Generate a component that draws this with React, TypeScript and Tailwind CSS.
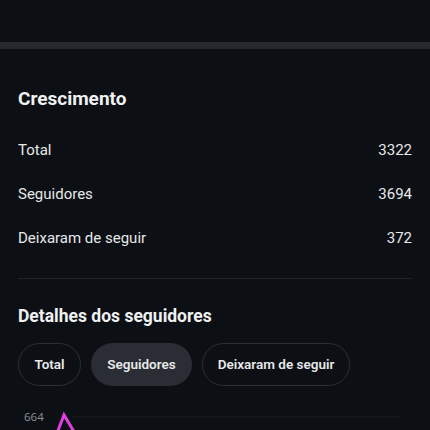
import React from "react";

const stats = [
  { label: "Total", value: "3322" },
  { label: "Seguidores", value: "3694" },
  { label: "Deixaram de seguir", value: "372" },
];

const tabs = [
  { label: "Total", width: "w-[63px]", active: false },
  { label: "Seguidores", width: "w-[101px]", active: true },
  { label: "Deixaram de seguir", width: "w-[148px]", active: false },
];

export default function App() {
  return (
    <div
      className="h-[430px] w-[430px] overflow-hidden bg-[#0c0f14] text-[#e7e9ea]"
      style={{ fontFamily: "Roboto, 'Noto Sans', sans-serif" }}
    >
      <div className="h-[42px]" />
      <div className="h-[7px] bg-[#25282d]" />

      <div className="px-[18px]">
        <h2 className="mt-[38px] text-[19px] font-bold leading-[24px] text-[#eff1f2]">
          Crescimento
        </h2>

        <div className="mt-[17px] flex flex-col">
          {stats.map((s) => (
            <div key={s.label} className="flex h-[44px] items-center justify-between text-[15px]">
              <span>{s.label}</span>
              <span>{s.value}</span>
            </div>
          ))}
        </div>

        <div className="mt-[18px] h-px bg-[#1f2227]" />

        <h3 className="mt-[25px] text-[17.5px] font-bold leading-[24px] text-[#eff1f2]">
          Detalhes dos seguidores
        </h3>

        <div className="mt-[15px] flex gap-[10px]">
          {tabs.map((t) => (
            <button
              key={t.label}
              className={`${t.width} flex h-[43px] items-center justify-center rounded-full text-[13.5px] font-semibold ${
                t.active
                  ? "bg-[#2a2d33] text-[#e7e9ea]"
                  : "border border-[#2c2f34] text-[#e7e9ea]"
              }`}
            >
              {t.label}
            </button>
          ))}
        </div>
      </div>

      <div className="relative mt-[23px] h-[40px]">
        <span
          className="absolute left-[24px] top-0 text-[11.5px] leading-[16px] text-[#8e9297]"
          style={{ fontFamily: "'Open Sans', sans-serif" }}
        >
          664
        </span>
        <svg className="absolute inset-0" width="430" height="40" viewBox="0 0 430 40">
          <line x1="72" y1="8" x2="400" y2="8" stroke="#1b1e23" strokeWidth="1" />
          <polyline
            points="54,32 64,6 82,36"
            fill="none"
            stroke="#e03fe0"
            strokeWidth="3"
            strokeLinejoin="miter"
          />
        </svg>
      </div>
    </div>
  );
}
